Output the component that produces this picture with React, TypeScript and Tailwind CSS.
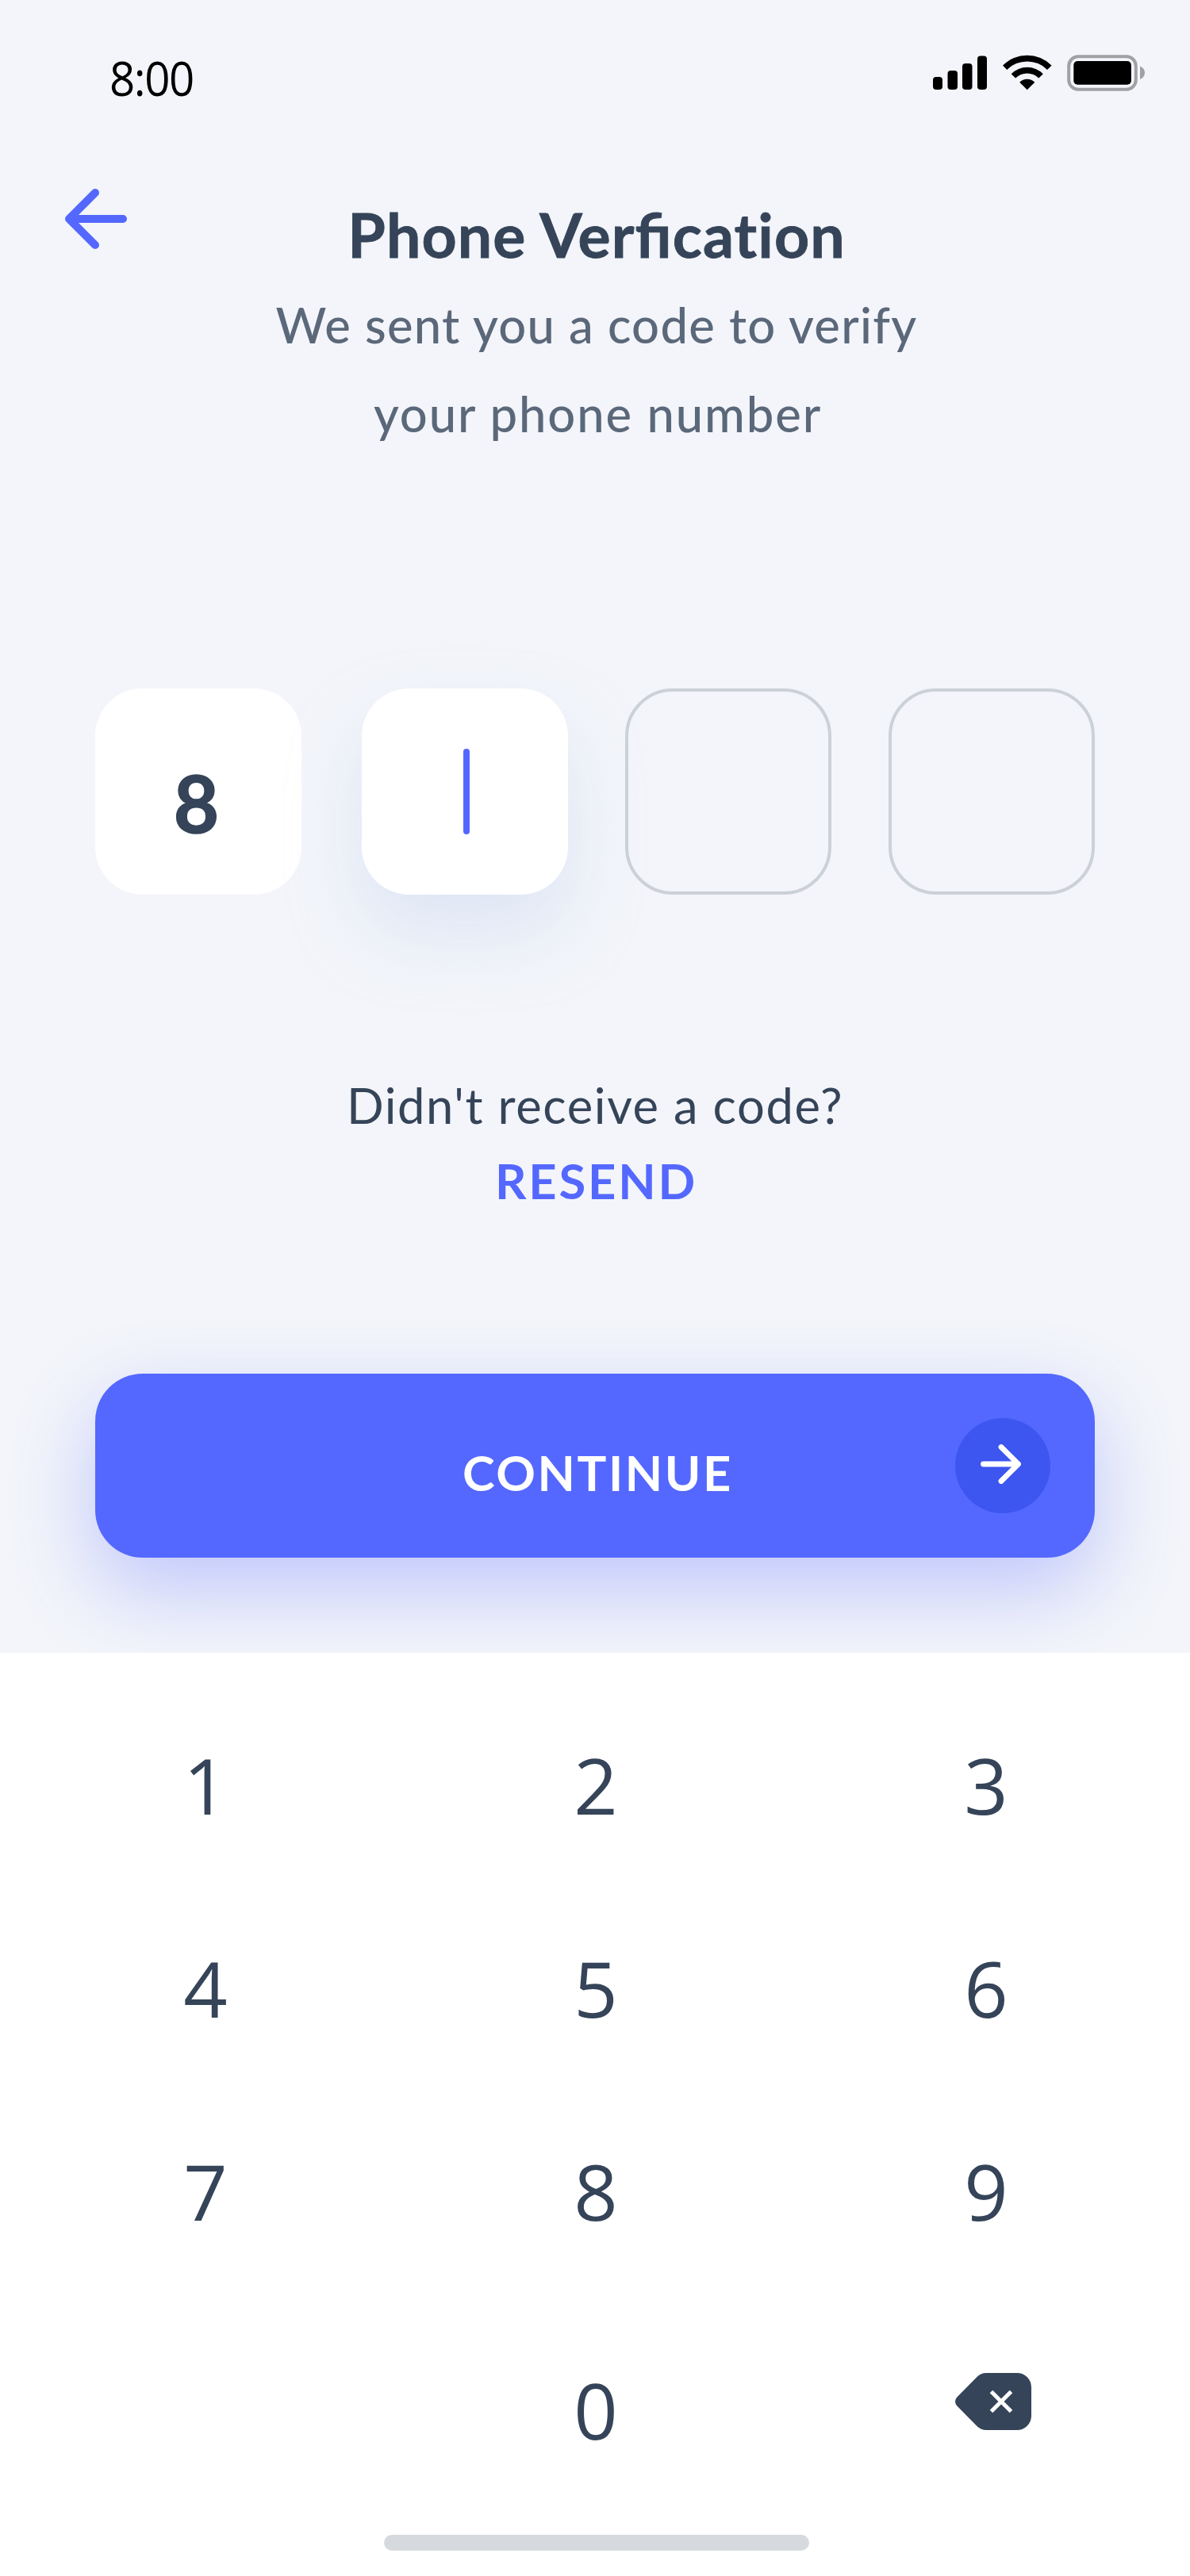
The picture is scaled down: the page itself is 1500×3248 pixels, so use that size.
function StatusIcons() {
  return (
    <svg width="268" height="46" viewBox="0 0 268 46" className="mt-px">
      <rect x="0" y="28" width="12" height="16" rx="4" />
      <rect x="18.5" y="20" width="12.5" height="24" rx="4" />
      <rect x="37" y="11" width="12.5" height="33" rx="4" />
      <rect x="56" y="1.5" width="12" height="42.5" rx="4" />
      {/* wifi */}
      <path d="M88 13.5a43.5 43.5 0 0 1 61.5 0l-5.4 5.4a35.8 35.8 0 0 0-50.7 0z" />
      <path d="M98.7 24.2a28.3 28.3 0 0 1 40.1 0l-5.4 5.4a20.7 20.7 0 0 0-29.3 0z" />
      <path d="M109.2 34.8a13.4 13.4 0 0 1 19.1 0l-9.55 9.5z" />
      {/* battery */}
      <rect x="171.2" y="2.2" width="84.6" height="41.6" rx="12" fill="none" stroke="#9fa1a4" strokeWidth="4" />
      <rect x="177.3" y="8" width="72.6" height="29.8" rx="5" />
      <path d="M261 14.6c4 1.6 6 4.6 6 8.2s-2 6.700-6 8.300z" fill="#9fa1a4" />
    </svg>
  );
}

function StatusBar() {
  return (
    <div className="flex h-[238px] items-start justify-between pl-[138px] pr-[56px] pt-[68px]">
      <span className="origin-left scale-x-94 font-['Open_Sans',sans-serif] text-[60px] leading-[60px] tracking-[-1.500px] text-black">8:00</span>
      <StatusIcons />
    </div>
  );
}

function Header() {
  return (
    <header className="flex h-[338px] items-start pl-[82px] pr-[78px]">
      <button type="button" aria-label="Back">
        <svg width="80" height="76" viewBox="0 0 80 76" fill="none" stroke="#5468ff" strokeWidth="10" strokeLinecap="round" strokeLinejoin="round">
          <path d="M73 38H6M38 5L5 38l33 33" />
        </svg>
      </button>
      <div className="flex flex-1 flex-col items-center pt-px text-center">
        <h1 className="text-[77px] leading-[112px] font-bold tracking-[1.05px] whitespace-nowrap [-webkit-text-stroke:0.8px_#354458]">
          Phone Ver<span className="[font-feature-settings:'liga'_1]">fi</span>cation
        </h1>
        <p className="mt-[2px] flex flex-col items-center text-[61.5px] leading-[112px] font-medium whitespace-nowrap text-[#5b687a]">
          <span className="tracking-[1.3px]">We sent you a code to verify</span>
          <span className="pl-[3px] tracking-[1.9px]">your phone number</span>
        </p>
      </div>
      <div className="w-[80px]" />
    </header>
  );
}

function CodeInputs() {
  return (
    <div className="mt-[292px] flex pl-[120px]">
      <div className="flex size-[260px] items-center justify-center rounded-[60px] bg-white pt-[27px] pr-[5px] text-[99px] leading-none font-bold [-webkit-text-stroke:1.4px_#354458]">
        8
      </div>
      <div className="ml-[76px] flex size-[260px] items-center justify-center rounded-[60px] bg-white pl-[4px] shadow-[0_48px_92px_rgba(190,208,238,0.4)]">
        <div className="h-[108px] w-[8px] rounded-full bg-[#5468ff]" />
      </div>
      <div className="ml-[72px] size-[260px] rounded-[60px] border-4 border-[#ccd1d8]" />
      <div className="ml-[72px] size-[260px] rounded-[60px] border-4 border-[#ccd1d8]" />
    </div>
  );
}

function ContinueButton() {
  return (
    <button type="button" className="mx-[120px] mt-[192px] flex h-[232px] items-center rounded-[60px] bg-[#5468ff] pr-[56px] pl-[176px] text-white shadow-[0_40px_104px_rgba(84,104,255,0.33)]">
      <span className="flex-1 pt-[16px] pl-[7px] text-center text-[61.5px] leading-[74px] font-bold tracking-[2.6px]">CONTINUE</span>
      <span className="flex size-[120px] items-center justify-center rounded-full bg-[#3d56f0]">
        <svg width="52" height="52" viewBox="0 0 52 52" fill="none" stroke="white" strokeWidth="6.8" strokeLinecap="round" strokeLinejoin="round" className="mr-[7px] mb-[4px]">
          <path d="M4.500 26H48M27 4.500L48.500 26 27 47.500" />
        </svg>
      </span>
    </button>
  );
}

const keyRows = [
  ["1", "2", "3"],
  ["4", "5", "6"],
  ["7", "8", "9"],
];

function Keypad() {
  return (
    <section className="relative h-[1164px] bg-white pr-[11px] pl-[13px] pt-[38px] font-['Open_Sans',sans-serif] text-[97px] leading-[256px]">
      {keyRows.map((row) => (
        <div key={row[0]} className="grid grid-cols-3">
          {row.map((digit) => (
            <button type="button" key={digit} className="text-center">
              {digit}
            </button>
          ))}
        </div>
      ))}
      <div className="mt-[20px] grid grid-cols-3">
        <div />
        <button type="button" className="text-center">0</button>
        <button type="button" aria-label="Delete" className="flex items-center justify-center pb-[20px] pl-[18px]">
          <svg width="96" height="72" viewBox="0 0 96 72">
            <path d="M39 0H78a18 18 0 0 1 18 18V54a18 18 0 0 1-18 18H39a16 16 0 0 1-11.300-4.700L2.300 41.600a8 8 0 0 1 0-11.200L27.700 4.700A16 16 0 0 1 39 0z" fill="#354458" />
            <path d="M45.500 23.500l25 25M70.500 23.500l-25 25" stroke="white" strokeWidth="5" />
          </svg>
        </button>
      </div>
      <div className="mx-auto mt-[30px] h-[20px] w-[536px] translate-x-px rounded-full bg-[#d6dade]" />
    </section>
  );
}

export default function App() {
  return (
    <main className="flex h-[3248px] w-[1500px] flex-col overflow-hidden bg-[#f3f5fa] font-['Lato',sans-serif] text-[#354458]">
      <StatusBar />
      <Header />
      <CodeInputs />
      <div className="mt-[208px] flex flex-col items-center">
        <p className="pt-px text-[61.5px] leading-[112px] tracking-[1.6px]">Didn't receive a code?</p>
        <button type="button" className="-mt-[11px] mb-[2px] pl-[3px] text-[61.500px] leading-[100px] font-bold tracking-[2.8px] text-[#5468ff]">RESEND</button>
      </div>
      <ContinueButton />
      <div className="mt-[120px]">
        <Keypad />
      </div>
    </main>
  );
}
